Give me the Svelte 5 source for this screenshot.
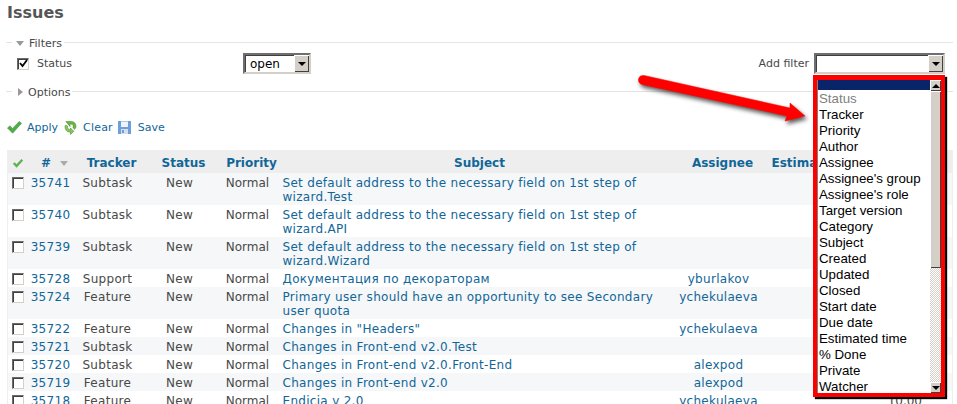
<script>
	const issues = [
		{ id: 35741, tracker: 'Subtask', subject: 'Set default address to the necessary field on 1st step of wizard.Test', assignee: '', odd: true },
		{ id: 35740, tracker: 'Subtask', subject: 'Set default address to the necessary field on 1st step of wizard.API', assignee: '' },
		{ id: 35739, tracker: 'Subtask', subject: 'Set default address to the necessary field on 1st step of wizard.Wizard', assignee: '', odd: true },
		{ id: 35728, tracker: 'Support', subject: 'Документация по декораторам', assignee: 'yburlakov' },
		{ id: 35724, tracker: 'Feature', subject: 'Primary user should have an opportunity to see Secondary user quota', assignee: 'ychekulaeva', odd: true },
		{ id: 35722, tracker: 'Feature', subject: 'Changes in "Headers"', assignee: 'ychekulaeva' },
		{ id: 35721, tracker: 'Subtask', subject: 'Changes in Front-end v2.0.Test', assignee: '', odd: true },
		{ id: 35720, tracker: 'Subtask', subject: 'Changes in Front-end v2.0.Front-End', assignee: 'alexpod' },
		{ id: 35719, tracker: 'Feature', subject: 'Changes in Front-end v2.0', assignee: 'alexpod', odd: true },
		{ id: 35718, tracker: 'Feature', subject: 'Endicia v 2.0', assignee: 'ychekulaeva', est: '10.00' }
	];

	const filterOptions = [
		'Tracker', 'Priority', 'Author', 'Assignee', "Assignee's group", "Assignee's role",
		'Target version', 'Category', 'Subject', 'Created', 'Updated', 'Closed',
		'Start date', 'Due date', 'Estimated time', '% Done', 'Private', 'Watcher'
	];
</script>

<main>
	<h2>Issues</h2>

	<fieldset class="group">
		<legend><span class="tri down"></span>Filters</legend>
		<div class="filters">
			<span class="cb"><svg viewBox="0 0 9 9" width="9" height="9"><path d="M1 4l2.500 3L8 1" fill="none" stroke="#000" stroke-width="1.800" /></svg></span>
			<span class="status-label">Status</span>
			<span class="select small"><span class="value">open</span><span class="drop"><i></i></span></span>
			<span class="add-label">Add filter</span>
			<span class="select wide"><span class="value"></span><span class="drop"><i></i></span></span>
		</div>
	</fieldset>

	<fieldset class="group options">
		<legend><span class="tri right"></span>Options</legend>
	</fieldset>

	<div class="actions">
		<svg class="ic-apply" viewBox="0 0 16 16" width="15" height="15"><path d="M0.500 8.500l2.800-2.300 2.500 3L13 1.500l2.500 2L6 14z" fill="#4fae4a" stroke="#3a8f3a" stroke-width="0.600" /></svg>
		<a class="l-apply" href="#apply">Apply</a>
		<svg class="ic-clear" viewBox="0 0 14 16" width="13" height="15"><path d="M2 1.500h6a5 5 0 0 1 3.500 8.500L9.500 8A2.300 2.300 0 0 0 7.500 4.300H6.500V7z" fill="#6cb33f" stroke="#3f8a2a" stroke-width="0.600" /><path d="M1.500 5.500A5.500 5.500 0 0 0 7 13v2.500l3.500-3.500L7 8.500V10.500A3 3 0 0 1 4 6.500z" fill="#8cc65a" stroke="#3f8a2a" stroke-width="0.600" /></svg>
		<a class="l-clear" href="#clear">Clear</a>
		<svg class="ic-save" viewBox="0 0 13 13" width="13" height="13"><rect width="13" height="13" fill="#6f9fd8" /><rect x="3" y="0.500" width="7" height="5.500" fill="#f0f4fa" /><rect x="3" y="8" width="7" height="5" fill="#d3e0f0" /><rect x="4" y="9" width="2" height="3" fill="#6f9fd8" /></svg>
		<a class="l-save" href="#save">Save</a>
	</div>

	<table>
		<colgroup>
			<col style="width:20px" /><col style="width:46px" /><col style="width:68px" /><col style="width:76px" />
			<col style="width:60px" /><col style="width:396px" /><col style="width:90px" /><col />
		</colgroup>
		<thead>
			<tr>
				<th class="first"><svg viewBox="0 0 16 16" width="12" height="11"><path d="M0.500 8.500l2.800-2.300 2.500 3L13 1.500l2.500 2L6 14z" fill="#5cb356" /></svg></th>
				<th># <span class="sort"></span></th>
				<th>Tracker</th>
				<th>Status</th>
				<th>Priority</th>
				<th>Subject</th>
				<th>Assignee</th>
				<th class="est">Estimated time</th>
			</tr>
		</thead>
		<tbody>
			{#each issues as issue}
				<tr class:odd={issue.odd}>
					<td class="check"><span class="cb"></span></td>
					<td class="id"><a href="#{issue.id}">{issue.id}</a></td>
					<td>{issue.tracker}</td>
					<td>New</td>
					<td class="prio">Normal</td>
					<td class="subject"><a href="#s">{issue.subject}</a></td>
					<td><a href="#u">{issue.assignee}</a></td>
					<td class="est-val">{issue.est ?? ''}</td>
				</tr>
			{/each}
		</tbody>
	</table>

	<svg class="arrow" viewBox="0 0 180 60" width="180" height="60">
		<path d="M8 5.500L154 38L154 33L169 46L149 51L151 46L6 14.500A4.600 4.600 0 0 1 8 5.500z" fill="#f00" stroke="#f00" stroke-width="0.500" stroke-linejoin="round" />
	</svg>

	<div class="dropdown">
		<div class="list">
			<div class="selected"></div>
			<div class="item disabled">Status</div>
			{#each filterOptions as option}
				<div class="item">{option}</div>
			{/each}
		</div>
		<div class="scrollbar">
			<span class="btn"><i class="up"></i></span>
			<span class="thumb"></span>
			<span class="track"></span>
			<span class="btn"><i></i></span>
		</div>
	</div>
</main>

<style>
	:global(body) {
		margin: 0;
		background: #fff;
		overflow: hidden;
	}

	main {
		position: relative;
		width: 957px;
		height: 404px;
		overflow: hidden;
		font-family: 'DejaVu Sans', Verdana, sans-serif;
		font-size: 12px;
		color: #484848;
	}

	a {
		color: #169;
		text-decoration: none;
	}

	h2 {
		margin: 0;
		padding: 0 0 0 7px;
		height: 34px;
		font-size: 16px;
		line-height: 26px;
		color: #555;
	}

	.group {
		margin: 0 4px 0 6px;
		padding: 0;
		border: 0;
		border-top: 1px solid #e4e4e4;
		height: 49px;
		box-sizing: border-box;
	}

	.group legend {
		padding: 3px 2px 0 4px;
		margin-left: 6px;
		color: #484848;
		line-height: 14px;
		font-size: 11px;
	}

	.tri {
		display: inline-block;
		width: 0;
		height: 0;
		margin-right: 5px;
	}

	.tri.down {
		border: 4px solid transparent;
		border-top: 5px solid #999;
		border-bottom: 0;
		margin-bottom: 1px;
	}

	.tri.right {
		border: 4px solid transparent;
		border-left: 5px solid #999;
		border-right: 0;
		margin-left: 2px;
	}

	.filters {
		display: flex;
		align-items: center;
		height: 21px;
		padding-left: 11px;
		margin-top: 2px;
	}

	.cb {
		display: inline-flex;
		align-items: center;
		justify-content: center;
		box-sizing: border-box;
		width: 12px;
		height: 12px;
		background: #fff;
		border: 1px solid;
		border-color: #6b6b6b #d4d0c8 #d4d0c8 #6b6b6b;
		box-shadow: inset 1px 1px 0 #404040;
	}

	.status-label {
		margin-left: 8px;
		width: 206px;
		font-size: 11px;
	}

	.select {
		display: inline-flex;
		align-items: stretch;
		box-sizing: border-box;
		height: 21px;
		background: #fff;
		border: 2px solid;
		border-color: #6f6f6f #d4d0c8 #d4d0c8 #6f6f6f;
		box-shadow: inset 1px 1px 0 #404040;
		color: #000;
		font-size: 12px;
	}

	.select .value {
		flex: 1;
		padding-left: 5px;
		line-height: 19px;
	}

	.drop {
		display: flex;
		align-items: center;
		justify-content: center;
		width: 15px;
		background: #d4d0c8;
		box-shadow: inset 1px 1px 0 #fff, inset -1px -1px 0 #404040;
	}

	.drop i,
	.btn i {
		border: 4px solid transparent;
		border-top: 4px solid #000;
		border-bottom: 0;
	}

	.btn i.up {
		border-top: 0;
		border-bottom: 4px solid #000;
	}

	.small {
		width: 68px;
	}

	.add-label {
		margin-left: auto;
		margin-right: 5px;
		font-size: 11px;
	}

	.wide {
		width: 131px;
		margin-right: 8px;
	}

	.options {
		height: 35px;
	}

	.actions {
		display: flex;
		align-items: center;
		height: 18px;
		padding-left: 7px;
		font-size: 11px;
		margin-bottom: 14px;
	}

	.actions svg {
		flex: none;
	}

	.l-apply {
		margin: 0 6px 0 5px;
	}

	.l-clear {
		margin: 0 5px 0 6px;
		letter-spacing: 0.200px;
	}

	.l-save {
		margin-left: 7px;
	}

	table {
		width: 946px;
		margin-left: 7px;
		border-collapse: collapse;
		table-layout: fixed;
		border-left: 1px solid #eee;
		border-right: 1px solid #eee;
	}

	th {
		box-sizing: border-box;
		height: 23px;
		padding: 2px 0 0 8px;
		background: #eee;
		color: #169;
		font-size: 12px;
		text-align: center;
		font-weight: bold;
		white-space: nowrap;
		overflow: hidden;
	}

	th.first {
		padding-left: 0;
	}

	th.est {
		text-align: left;
	}

	th svg {
		vertical-align: middle;
	}

	.sort {
		display: inline-block;
		border: 4px solid transparent;
		border-top: 5px solid #aaa;
		border-bottom: 0;
		margin-left: 5px;
		vertical-align: middle;
	}

	td {
		padding: 3px 0 1px;
		height: 14px;
		line-height: 14px;
		text-align: center;
		vertical-align: top;
		background: #fff;
		letter-spacing: 0.300px;
	}

	tr.odd td {
		background: #f6f7f8;
	}

	td.prio {
		letter-spacing: 0;
	}

	td.check {
		line-height: 0;
		padding-top: 4px;
		padding-bottom: 0;
	}

	td.subject {
		text-align: left;
		padding-left: 5px;
		padding-right: 10px;
	}

	.est-val {
		text-align: right;
		padding-right: 30px;
		letter-spacing: 0;
	}

	.arrow {
		position: absolute;
		left: 636px;
		top: 70px;
		filter: drop-shadow(2px 3px 2px rgba(0, 0, 0, 0.650));
	}

	.dropdown {
		position: absolute;
		left: 813px;
		top: 75px;
		width: 132px;
		height: 322px;
		box-sizing: border-box;
		display: flex;
		background: #fff;
		border: 4px solid #f00;
		border-top-width: 5px;
		box-shadow: 2px 2px 1px #000;
		font-family: 'Liberation Sans', Arial, sans-serif;
		font-size: 13.300px;
		color: #000;
	}

	.list {
		flex: 1;
		min-width: 0;
		border-left: 1px solid #808080;
	}

	.selected {
		height: 10px;
		margin-bottom: 1px;
		background: #0a246a;
	}

	.item {
		height: 16px;
		line-height: 16px;
		padding-left: 1px;
		white-space: nowrap;
	}

	.disabled {
		color: #808080;
	}

	.scrollbar {
		display: flex;
		flex-direction: column;
		flex: none;
		width: 11px;
	}

	.btn {
		display: flex;
		align-items: center;
		justify-content: center;
		height: 11px;
		flex: none;
		background: #d4d0c8;
		box-shadow: inset 1px 1px 0 #fff, inset -1px -1px 0 #404040;
	}

	.thumb {
		height: 177px;
		flex: none;
		background: #d4d0c8;
		box-shadow: inset 1px 1px 0 #fff, inset -1px -1px 0 #404040;
	}

	.track {
		flex: 1;
		background: repeating-conic-gradient(#d4d0c8 0 25%, #fff 0 50%) 0 0 / 2px 2px;
	}
</style>
